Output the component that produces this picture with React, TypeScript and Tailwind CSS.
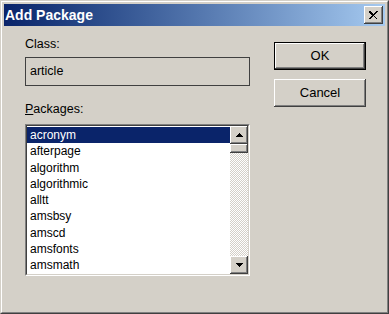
import React from 'react'

const packages = [
  'acronym',
  'afterpage',
  'algorithm',
  'algorithmic',
  'alltt',
  'amsbsy',
  'amscd',
  'amsfonts',
  'amsmath',
]

const raised =
  'shadow-[inset_-1px_-1px_#404040,inset_1px_1px_#ffffff,inset_-2px_-2px_#808080,inset_2px_2px_#d4d0c8]'

function Arrow({ up }: { up?: boolean }) {
  return (
    <svg width="7" height="4" viewBox="0 0 7 4" shapeRendering="crispEdges">
      {up ? (
        <path d="M3 0h1v1h1v1h1v1h1v1H0V3h1V2h1V1h1z" fill="#000" />
      ) : (
        <path d="M0 0h7v1H6v1H5v1H4v1H3V3H2V2H1V1H0z" fill="#000" />
      )}
    </svg>
  )
}

function ScrollButton({ up }: { up?: boolean }) {
  return (
    <div className={`h-[18px] w-full bg-[#d4d0c8] flex items-center justify-center ${raised}`}>
      <Arrow up={up} />
    </div>
  )
}

function PushButton({ label, isDefault }: { label: string; isDefault?: boolean }) {
  return (
    <button
      className={`w-[92px] h-[28px] bg-[#d4d0c8] text-[13px] text-black flex items-center justify-center ${
        isDefault ? 'border border-black' : ''
      } ${raised}`}
    >
      {label}
    </button>
  )
}

export default function App() {
  return (
    <div
      className="w-[389px] h-[314px] bg-[#d4d0c8] border border-t-[#d4d0c8] border-l-[#d4d0c8] border-b-[#404040] border-r-[#404040]"
      style={{ fontFamily: '"Liberation Sans", Arial, sans-serif' }}
    >
      <div className="h-full border border-t-white border-l-white border-b-[#808080] border-r-[#808080] p-[2px] flex flex-col">
        {/* title bar */}
        <div className="h-[22px] bg-gradient-to-r from-[#0a246a] to-[#a6caf0] flex items-center justify-between pl-[1px] pr-[2px]">
          <span className="text-white font-bold text-[14px] leading-none">Add Package</span>
          <div className={`w-[19px] h-[18px] bg-[#d4d0c8] flex items-center justify-center ${raised}`}>
            <svg width="9" height="8" viewBox="0 0 9 8" shapeRendering="crispEdges">
              <path
                d="M0 0h2v1h1v1h1v1h1V2h1V1h1V0h2v1H8v1H7v1H6v1H5v1h1v1h1v1h1v1H7V7H6V6H5V5H4v1H3v1H2v1H0V7h1V6h1V5h1V4H2V3H1V2H0z"
                fill="#000"
              />
            </svg>
          </div>
        </div>

        <div className="flex flex-1 pl-[21px]">
          {/* left column */}
          <div className="w-[225px] flex flex-col pt-[8px]">
            <div className="h-[18px] text-[12.5px] leading-[20px] text-black">Class:</div>
            <div className="mt-[5px] h-[29px] border border-[#404040] flex items-center pl-[4px] text-[12.5px] text-black">
              article
            </div>
            <div className="mt-[13px] h-[18px] text-[12.5px] leading-[20px] text-black">
              <span className="underline">P</span>ackages:
            </div>
            <div className="mt-[7px] h-[152px] border border-t-[#808080] border-l-[#808080] border-b-white border-r-white">
              <div className="h-full border border-t-[#404040] border-l-[#404040] border-b-[#d4d0c8] border-r-[#d4d0c8] bg-white flex">
                <div className="flex-1 pt-[1px] overflow-hidden">
                  {packages.map((p, i) => (
                    <div
                      key={p}
                      className={`h-[16.3px] leading-[16.3px] text-[12px] pl-[3px] ${
                        i === 0 ? 'bg-[#0a246a] text-white' : 'text-black'
                      }`}
                    >
                      {p}
                    </div>
                  ))}
                </div>
                <div className="w-[18px] flex flex-col">
                  <ScrollButton up />
                  <div className={`h-[9px] bg-[#d4d0c8] ${raised}`} />
                  <div className="flex-1 bg-[image:repeating-conic-gradient(#ffffff_0_25%,#d4d0c8_0_50%)] bg-[length:2px_2px]" />
                  <ScrollButton />
                </div>
              </div>
            </div>
          </div>

          {/* right column */}
          <div className="ml-[24px] flex flex-col gap-[9px] pt-[16px]">
            <PushButton label="OK" isDefault />
            <PushButton label="Cancel" />
          </div>
        </div>
      </div>
    </div>
  )
}
